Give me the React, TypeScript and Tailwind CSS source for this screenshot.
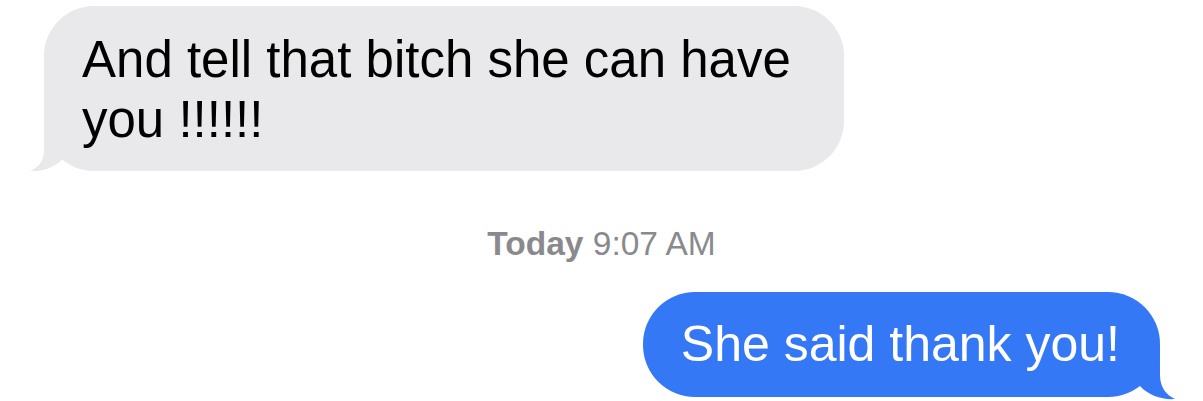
import React from "react";

const font = { fontFamily: '"Liberation Sans", Arial, sans-serif' };

function GrayTail() {
  return (
    <svg
      className="absolute left-[-14px] top-[109px] overflow-visible"
      width="40"
      height="57"
      viewBox="0 0 40 57"
    >
      <path d="M14 6 L14 35 C14 46 8 53 0 56 C11 57 23 53 32 45 L40 30 Z" fill="#e9e9eb" />
    </svg>
  );
}

function BlueTail() {
  return (
    <svg
      className="absolute right-[-15px] top-[48px] overflow-visible"
      width="40"
      height="61"
      viewBox="0 0 40 61"
    >
      <path d="M25 5 L25 35 C25 47 31 55 40 59 C28 60 14 56 5 46 L-3 20 Z" fill="#3478f6" />
    </svg>
  );
}

export default function App() {
  return (
    <div className="w-full h-[401px] bg-white overflow-hidden flex flex-col" style={font}>
      {/* incoming */}
      <div className="relative self-start ml-[44px] mt-[6px] w-[800px]">
        <GrayTail />
        <div className="relative bg-[#e9e9eb] rounded-[50px] pl-[38px] pr-[38px] pt-[24px] pb-[21px] text-[51px] leading-[60px] text-black">
          And tell that bitch she can have you !!!!!!
        </div>
      </div>

      {/* timestamp */}
      <div className="mt-[53px] text-center text-[33.5px] leading-[40px] text-[#8a8a8e]">
        <span className="font-semibold">Today</span> 9:07 AM
      </div>

      {/* outgoing */}
      <div className="relative self-end mr-[43px] mt-[28px]">
        <BlueTail />
        <div className="relative bg-[#3478f6] rounded-[52px] pl-[38px] pr-[40px] pt-[22px] pb-[23px] text-[50px] leading-[60px] text-white whitespace-nowrap">
          She said thank you!
        </div>
      </div>
    </div>
  );
}
